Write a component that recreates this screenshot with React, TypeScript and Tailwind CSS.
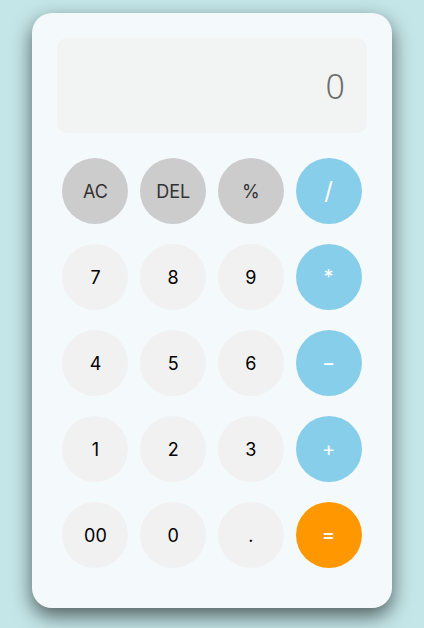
import React, { useState } from 'react'

type Key = { label: string; kind: 'fn' | 'num' | 'op' | 'eq' }

const keys: Key[] = [
  { label: 'AC', kind: 'fn' },
  { label: 'DEL', kind: 'fn' },
  { label: '%', kind: 'fn' },
  { label: '/', kind: 'op' },
  { label: '7', kind: 'num' },
  { label: '8', kind: 'num' },
  { label: '9', kind: 'num' },
  { label: '*', kind: 'op' },
  { label: '4', kind: 'num' },
  { label: '5', kind: 'num' },
  { label: '6', kind: 'num' },
  { label: '-', kind: 'op' },
  { label: '1', kind: 'num' },
  { label: '2', kind: 'num' },
  { label: '3', kind: 'num' },
  { label: '+', kind: 'op' },
  { label: '00', kind: 'num' },
  { label: '0', kind: 'num' },
  { label: '.', kind: 'num' },
  { label: '=', kind: 'eq' },
]

const kindClass: Record<Key['kind'], string> = {
  fn: 'bg-[#cccccc] text-[#333333] text-[18px]',
  num: 'bg-[#f1f1f1] text-black text-[18px]',
  op: 'bg-[#87ceeb] text-white text-[20px]',
  eq: 'bg-[#ff9800] text-white text-[20px] font-medium',
}

export default function App() {
  const [value, setValue] = useState('0')

  const press = (k: string) => {
    if (k === 'AC') return setValue('0')
    if (k === 'DEL') return setValue(v => (v.length > 1 ? v.slice(0, -1) : '0'))
    if (k === '=') {
      try {
        // eslint-disable-next-line no-new-func
        const r = Function(`return (${value.replace(/%/g, '/100')})`)()
        setValue(String(r))
      } catch {
        setValue('Error')
      }
      return
    }
    setValue(v => (v === '0' && k !== '.' ? k : v + k))
  }

  return (
    <div className="min-h-screen bg-[#c4e6e8] pt-[13px] font-['Inter','Noto_Sans',sans-serif]">
      <div className="mx-auto w-[360px] rounded-[20px] bg-[#f4f9fc] px-[25px] pt-[25px] pb-[40px] shadow-[0_8px_20px_rgba(0,0,0,0.6)]">
        {/* Display */}
        <div className="flex h-[95px] items-center justify-end rounded-[10px] bg-[#f2f4f3] pr-[22px] pt-[1px]">
          <span className="font-['Noto_Sans',sans-serif] text-[34px] font-light text-[#6e6e6e]">{value}</span>
        </div>

        {/* Keypad */}
        <div className="mt-[25px] grid grid-cols-[repeat(4,66px)] justify-center gap-x-[11.7px] gap-y-[20px]">
          {keys.map(k => (
            <button
              key={k.label}
              onClick={() => press(k.label)}
              className={`flex h-[66px] w-[66px] items-center justify-center rounded-full ${kindClass[k.kind]} ${k.label === '/' ? 'text-[24px]' : ''}`}
            >
              {k.label === '-' ? '−' : k.label}
            </button>
          ))}
        </div>
      </div>
    </div>
  )
}
